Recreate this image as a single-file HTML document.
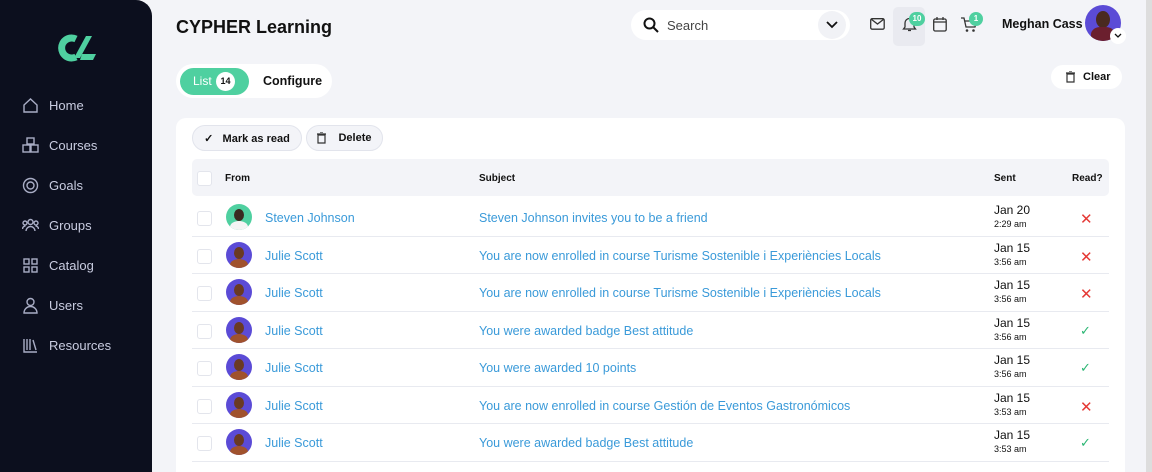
<!DOCTYPE html><html style="width:1152px;height:472px;overflow:hidden"><head><style>
*{box-sizing:border-box;margin:0;padding:0}
body{width:1152px;height:472px;overflow:hidden;background:#f3f4f8;font-family:"Liberation Sans",sans-serif;position:relative;color:#111}
.side{position:absolute;left:0;top:0;width:152px;height:472px;background:#0c0f1e;border-top-right-radius:16px}
.nav{position:absolute;left:22px;display:flex;align-items:center;color:#c9cce0;font-size:13px}
.nav svg{width:17px;height:17px;margin-right:10px;stroke:#a9adc5;fill:none;stroke-width:1.4}
.abs{position:absolute}
.card{position:absolute;left:176px;top:118px;width:949px;height:354px;background:#fff;border-radius:10px 10px 0 0;overflow:hidden}
.btn{position:absolute;height:26px;border:1px solid #e2e4ec;background:#f3f4f8;border-radius:13px;font-size:11px;font-weight:bold;display:flex;align-items:center;justify-content:center}
.hdr{position:absolute;left:16px;top:41px;width:917px;height:37px;background:#f3f4f8;border-radius:5px;font-size:10px;font-weight:bold}
.cb{position:absolute;width:15px;height:15px;border:1px solid #e3e5ec;border-radius:3px;background:#fff}
.row{position:absolute;left:16px;width:917px;height:37.5px;border-bottom:1px solid #e8eaf0}
.row .t{position:absolute;top:12px;font-size:12.5px;color:#3a9ad9}
.av{position:absolute;left:34px;top:5px;width:26px;height:26px;border-radius:50%;background:#5b4bd6;overflow:hidden}
.av i{position:absolute;left:8px;top:5px;width:10px;height:12px;border-radius:50%;background:#6a3a22}
.av b{position:absolute;left:4px;top:17px;width:18px;height:12px;border-radius:50%;background:#a0522d}
.d{position:absolute;left:802px;top:5px;font-size:12px;line-height:13px}
.d small{font-size:9px}
.r{position:absolute;left:888px;top:11px;font-size:15px}
</style></head><body>
<div class="side">
<svg class="abs" style="left:56px;top:34px" width="40" height="28" viewBox="0 0 40 28"><path d="M20 5a10 10 0 1 0 0 18" stroke="#4fd0a0" stroke-width="7" fill="none"/><path d="M30 2l-12 22h6l12-22z" fill="#4fd0a0"/><path d="M26 20h14l-3 6h-13z" fill="#4fd0a0"/></svg>
<div class="nav" style="top:97px"><svg viewBox="0 0 17 17"><path d="M2 8l6.5-6 6.5 6v7H2z"/></svg>Home</div>
<div class="nav" style="top:137px"><svg viewBox="0 0 17 17"><rect x="5" y="1" width="7" height="6"/><rect x="1" y="8" width="7" height="7"/><rect x="9" y="8" width="7" height="7"/></svg>Courses</div>
<div class="nav" style="top:177px"><svg viewBox="0 0 17 17"><circle cx="8.5" cy="8.5" r="7"/><circle cx="8.5" cy="8.5" r="3.5"/></svg>Goals</div>
<div class="nav" style="top:217px"><svg viewBox="0 0 17 17"><circle cx="8.5" cy="5" r="2.5"/><circle cx="3" cy="6" r="2"/><circle cx="14" cy="6" r="2"/><path d="M4 14a4.5 4.5 0 0 1 9 0M0.5 12a3 3 0 0 1 3-3M16.5 12a3 3 0 0 0-3-3"/></svg>Groups</div>
<div class="nav" style="top:257px"><svg viewBox="0 0 17 17"><rect x="2" y="2" width="5" height="5"/><rect x="10" y="2" width="5" height="5"/><rect x="2" y="10" width="5" height="5"/><rect x="10" y="10" width="5" height="5"/></svg>Catalog</div>
<div class="nav" style="top:297px"><svg viewBox="0 0 17 17"><circle cx="8.5" cy="5" r="3.5"/><path d="M2 16a6.5 6.5 0 0 1 13 0z"/></svg>Users</div>
<div class="nav" style="top:337px"><svg viewBox="0 0 17 17"><path d="M2 2v13h13M5 2v11M8 2v11M11 3l3 10"/></svg>Resources</div>
</div>
<div class="abs" style="left:176px;top:17px;font-size:18px;font-weight:bold">CYPHER Learning</div>
<div class="abs" style="left:631px;top:10px;width:219px;height:30px;background:#fff;border-radius:15px"></div>
<svg class="abs" style="left:643px;top:17px" width="16" height="16" viewBox="0 0 16 16"><circle cx="6.5" cy="6.5" r="5" stroke="#111" stroke-width="2" fill="none"/><path d="M10 10l5 5" stroke="#111" stroke-width="2"/></svg>
<div class="abs" style="left:667px;top:18px;font-size:13px;color:#444">Search</div>
<div class="abs" style="left:818px;top:11px;width:28px;height:28px;border-radius:50%;background:#f1f2f6"></div>
<svg class="abs" style="left:826px;top:21px" width="12" height="8"><path d="M1 1l5 5 5-5" stroke="#111" stroke-width="1.8" fill="none"/></svg>
<svg class="abs" style="left:870px;top:18px" width="15" height="12"><rect x=".7" y=".7" width="13.5" height="10.5" rx="1.5" stroke="#333" fill="none" stroke-width="1.3"/><path d="M1 1l6.5 5 6.5-5" stroke="#333" fill="none" stroke-width="1.3"/></svg>
<div class="abs" style="left:893px;top:7px;width:32px;height:39px;background:#e9eaf0;border-radius:5px"></div>
<svg class="abs" style="left:902px;top:16px" width="15" height="16"><path d="M3 11V7a4.5 4.5 0 0 1 9 0v4l1.5 2h-12zM6 14.5h3" stroke="#333" fill="none" stroke-width="1.3"/></svg>
<div class="abs" style="left:909px;top:12px;width:16px;height:14px;border-radius:7px;background:#4fd0a0;color:#fff;font-size:8px;text-align:center;line-height:14px;font-weight:bold">10</div>
<svg class="abs" style="left:933px;top:17px" width="14" height="15"><rect x=".7" y="2" width="12.5" height="12" rx="1.5" stroke="#333" fill="none" stroke-width="1.3"/><path d="M1 5h12M4 0v3M10 0v3" stroke="#333" stroke-width="1.3"/></svg>
<svg class="abs" style="left:961px;top:17px" width="16" height="16"><path d="M0 1h3l2 9h9l1.5-6H4" stroke="#333" fill="none" stroke-width="1.3"/><circle cx="6" cy="13.5" r="1.3" fill="#333"/><circle cx="12.5" cy="13.5" r="1.3" fill="#333"/></svg>
<div class="abs" style="left:969px;top:12px;width:14px;height:14px;border-radius:7px;background:#4fd0a0;color:#fff;font-size:8px;text-align:center;line-height:14px;font-weight:bold">1</div>
<div class="abs" style="left:1002px;top:17px;font-size:12.5px;font-weight:bold">Meghan Cass</div>
<div class="abs" style="left:1085px;top:5px;width:36px;height:36px;border-radius:50%;background:#5b4bd6;overflow:hidden"><div class="abs" style="left:11px;top:6px;width:14px;height:17px;border-radius:50%;background:#4a2a20"></div><div class="abs" style="left:6px;top:22px;width:24px;height:18px;border-radius:40%;background:#6b1f2e"></div></div>
<div class="abs" style="left:1110px;top:28px;width:16px;height:16px;border-radius:50%;background:#fff"></div>
<svg class="abs" style="left:1114px;top:33px" width="8" height="6"><path d="M1 1l3 3 3-3" stroke="#111" stroke-width="1.3" fill="none"/></svg>
<div class="abs" style="left:176px;top:64px;width:156px;height:34px;background:#fff;border-radius:17px"></div>
<div class="abs" style="left:180px;top:68px;width:69px;height:27px;background:#4fd0a0;border-radius:14px;color:#fff;font-size:12px;line-height:27px;padding-left:13px">List</div>
<div class="abs" style="left:216px;top:72px;width:19px;height:19px;border-radius:50%;background:#fff;font-size:9px;font-weight:bold;text-align:center;line-height:19px">14</div>
<div class="abs" style="left:263px;top:74px;font-size:12.5px;font-weight:bold">Configure</div>
<div class="abs" style="left:1051px;top:65px;width:71px;height:24px;background:#fff;border-radius:12px;font-size:11px;font-weight:bold;line-height:24px;padding-left:32px">Clear</div>
<svg class="abs" style="left:1066px;top:71px" width="9" height="12"><path d="M1 3h7v8H1zM0 2h9M3 0h3" stroke="#333" fill="none" stroke-width="1.2"/></svg>
<div class="card">
<div class="btn" style="left:16px;top:7px;width:110px">✓&nbsp;&nbsp;&nbsp;Mark as read</div>
<div class="btn" style="left:130px;top:7px;width:77px"><svg width="9" height="12" style="margin-right:12px"><path d="M1 3h7v8H1zM0 2h9M3 0h3" stroke="#333" fill="none" stroke-width="1.2"/></svg>Delete</div>
<div class="hdr"><div class="cb" style="left:5px;top:12px"></div><span class="abs" style="left:33px;top:14px">From</span><span class="abs" style="left:287px;top:14px">Subject</span><span class="abs" style="left:802px;top:14px">Sent</span><span class="abs" style="left:880px;top:14px">Read?</span></div>
<div class="row" style="top:81px"><div class="cb" style="left:5px;top:12px"></div><div class="av" style="background:#4fd0a0"><i style="background:#3a2a20"></i><b style="background:#f4f4f4"></b></div><span class="t" style="left:73px">Steven Johnson</span><span class="t" style="left:287px">Steven Johnson invites you to be a friend</span><div class="d">Jan 20<br><small>2:29 am</small></div><span class="r" style="color:#e53935">✕</span></div>
<div class="row" style="top:118.5px"><div class="cb" style="left:5px;top:12px"></div><div class="av"><i></i><b></b></div><span class="t" style="left:73px">Julie Scott</span><span class="t" style="left:287px">You are now enrolled in course Turisme Sostenible i Experiències Locals</span><div class="d">Jan 15<br><small>3:56 am</small></div><span class="r" style="color:#e53935">✕</span></div>
<div class="row" style="top:156px"><div class="cb" style="left:5px;top:12px"></div><div class="av"><i></i><b></b></div><span class="t" style="left:73px">Julie Scott</span><span class="t" style="left:287px">You are now enrolled in course Turisme Sostenible i Experiències Locals</span><div class="d">Jan 15<br><small>3:56 am</small></div><span class="r" style="color:#e53935">✕</span></div>
<div class="row" style="top:193.5px"><div class="cb" style="left:5px;top:12px"></div><div class="av"><i></i><b></b></div><span class="t" style="left:73px">Julie Scott</span><span class="t" style="left:287px">You were awarded badge Best attitude</span><div class="d">Jan 15<br><small>3:56 am</small></div><span class="r" style="color:#2bb673;font-size:13px">✓</span></div>
<div class="row" style="top:231px"><div class="cb" style="left:5px;top:12px"></div><div class="av"><i></i><b></b></div><span class="t" style="left:73px">Julie Scott</span><span class="t" style="left:287px">You were awarded 10 points</span><div class="d">Jan 15<br><small>3:56 am</small></div><span class="r" style="color:#2bb673;font-size:13px">✓</span></div>
<div class="row" style="top:268.5px"><div class="cb" style="left:5px;top:12px"></div><div class="av"><i></i><b></b></div><span class="t" style="left:73px">Julie Scott</span><span class="t" style="left:287px">You are now enrolled in course Gestión de Eventos Gastronómicos</span><div class="d">Jan 15<br><small>3:53 am</small></div><span class="r" style="color:#e53935">✕</span></div>
<div class="row" style="top:306px"><div class="cb" style="left:5px;top:12px"></div><div class="av"><i></i><b></b></div><span class="t" style="left:73px">Julie Scott</span><span class="t" style="left:287px">You were awarded badge Best attitude</span><div class="d">Jan 15<br><small>3:53 am</small></div><span class="r" style="color:#2bb673;font-size:13px">✓</span></div>
</div>
<div class="abs" style="left:1146px;top:0;width:6px;height:472px;background:#ddd"></div>
</body></html>
